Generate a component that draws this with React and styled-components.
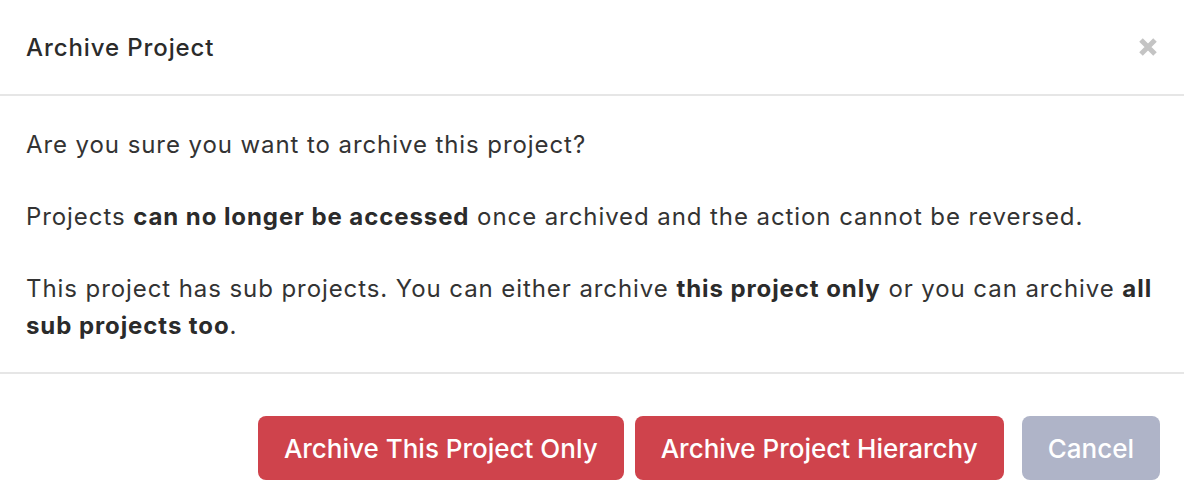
import React from "react";
import styled, { createGlobalStyle } from "styled-components";

const Global = createGlobalStyle`
  html, body { margin: 0; padding: 0; background: #fff; }
  body { font-family: Inter, "Noto Sans", sans-serif; color: #333; }
`;

const Dialog = styled.div`
  width: 1184px;
  height: 500px;
  background: #fff;
  display: flex;
  flex-direction: column;
`;

const Header = styled.div`
  height: 94px;
  display: flex;
  align-items: center;
  justify-content: space-between;
  padding: 0 24px 0 26px;
  border-bottom: 2px solid #e6e6e6;
`;

const Title = styled.h2`
  margin: 0;
  font-size: 24px;
  letter-spacing: 0.9px;
  font-weight: 500;
  color: #2b2b2b;
`;

const Close = styled.button`
  border: 0;
  background: none;
  padding: 0;
  width: 24px;
  height: 24px;
  display: flex;
  align-items: center;
  justify-content: center;
  cursor: pointer;
`;

const Body = styled.div`
  padding: 30px 26px 28px;
  border-bottom: 2px solid #e6e6e6;
`;

const Para = styled.p`
  margin: 0 0 35px;
  font-size: 24px;
  letter-spacing: 0.92px;
  line-height: 37px;
  color: #333;
  &:last-child { margin-bottom: 0; }
  b { font-weight: 700; color: #2b2b2b; }
`;

const Footer = styled.div`
  display: flex;
  justify-content: flex-end;
  gap: 11px;
  padding: 42px 24px 0;
`;

const Button = styled.button`
  height: 64px;
  padding: 0 26px;
  border: 0;
  border-radius: 8px;
  font-family: Inter, "Noto Sans", sans-serif;
  font-size: 26px;
  font-weight: 500;
  color: #fff;
  background: ${(p) => (p.$variant === "muted" ? "#afb4c8" : "#cf434c")};
  margin-left: ${(p) => (p.$variant === "muted" ? "7px" : "0")};
  cursor: pointer;
`;

export default function App() {
  return (
    <>
      <Global />
      <Dialog>
        <Header>
          <Title>Archive Project</Title>
          <Close aria-label="Close">
            <svg width="22" height="22" viewBox="0 0 22 22">
              <path d="M4 4 L18 18 M18 4 L4 18" stroke="#c4c4c4" strokeWidth="5" strokeLinecap="butt" />
            </svg>
          </Close>
        </Header>
        <Body>
          <Para>Are you sure you want to archive this project?</Para>
          <Para>
            Projects <b>can no longer be accessed</b> once archived and the action cannot be reversed.
          </Para>
          <Para>
            This project has sub projects. You can either archive <b>this project only</b> or you can archive{" "}
            <b>all sub projects too</b>.
          </Para>
        </Body>
        <Footer>
          <Button>Archive This Project Only</Button>
          <Button>Archive Project Hierarchy</Button>
          <Button $variant="muted">Cancel</Button>
        </Footer>
      </Dialog>
    </>
  );
}
